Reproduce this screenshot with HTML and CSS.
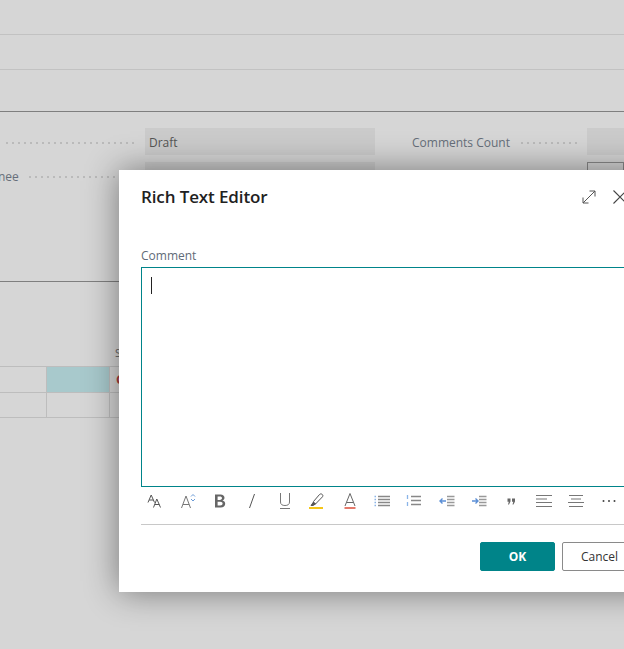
FILE: index.html
```html
<!DOCTYPE html>
<html lang="en">
<head>
    <meta charset="UTF-8">
    <title>Rich Text Editor</title>
    <link rel="stylesheet" href="styles.css">
</head>
<body>

    <!-- Page behind the dialog -->
    <div class="page">
        <div class="bar bar-top"></div>
        <div class="bar bar-mid"></div>
        <div class="bar bar-low"></div>

        <section class="form">
            <div class="form-col">
                <div class="field">
                    <span class="field-label"></span>
                    <span class="dots dots-wide"></span>
                    <span class="field-value">Draft</span>
                </div>
                <div class="field field-next">
                    <span class="field-label field-cut">nee</span>
                    <span class="dots"></span>
                    <span class="field-value"></span>
                </div>
            </div>
            <div class="form-col form-col-right">
                <div class="field">
                    <span class="field-label">Comments Count</span>
                    <span class="dots dots-short"></span>
                    <span class="field-value"></span>
                </div>
                <div class="field field-next field-end">
                    <span class="field-value field-outline"></span>
                </div>
            </div>
        </section>

        <section class="lines">
            <div class="lines-head">S</div>
            <div class="lines-row">
                <div class="cell cell-a"></div>
                <div class="cell cell-b cell-active"></div>
                <div class="cell cell-c cell-red">C</div>
            </div>
            <div class="lines-row">
                <div class="cell cell-a"></div>
                <div class="cell cell-b"></div>
                <div class="cell cell-c"></div>
            </div>
        </section>
    </div>

    <!-- Dialog -->
    <div class="dialog">
        <div class="dialog-head">
            <h1>Rich Text Editor</h1>
            <div class="dialog-actions">
                <svg class="icon-expand" width="16" height="16" viewBox="0 0 16 16" fill="none" stroke="#555" stroke-width="1">
                    <path d="M2 14 14 2M8.5 2H14V7.5M2 8.5V14H7.5"/>
                </svg>
                <svg class="icon-close" width="16" height="16" viewBox="0 0 16 16" fill="none" stroke="#444" stroke-width="1.1">
                    <path d="M1.5 1.5 14.5 14.5M14.5 1.5 1.5 14.5"/>
                </svg>
            </div>
        </div>

        <label class="editor-label">Comment</label>
        <div class="editor"><span class="caret"></span></div>

        <div class="toolbar">
            <span class="tool">
                <svg width="16" height="16" viewBox="0 0 16 16" fill="none" stroke="#555" stroke-width="1">
                    <path d="M1 9.5 4.2 2 7.5 9.5M2.2 7H6.3M6.5 14.5 9.8 6 13.5 14.5M7.8 11.5H12.3"/>
                </svg>
            </span>
            <span class="tool">
                <svg width="16" height="16" viewBox="0 0 16 16" fill="none" stroke="#777" stroke-width="1">
                    <path d="M1.5 15 6 3 10.5 15M3 11.5H9"/>
                    <path d="M11 3.5 13 1.5 15 3.5M11 6 13 8 15 6" stroke="#6a9bd8"/>
                </svg>
            </span>
            <span class="tool">
                <svg width="16" height="16" viewBox="0 0 16 16" fill="#666">
                    <path fill-rule="evenodd" d="M3 1.5H8.5C11 1.5 12.5 2.8 12.5 4.8 12.5 6.2 11.6 7.2 10.3 7.6 12 7.9 13.2 9.1 13.2 10.8 13.2 13 11.4 14.5 8.8 14.5H3ZM5.6 3.5V6.9H7.8C9.2 6.9 10 6.2 10 5.1 10 4 9.2 3.5 7.9 3.5ZM5.6 8.8V12.5H8.2C9.7 12.5 10.6 11.8 10.6 10.6 10.6 9.5 9.7 8.8 8.1 8.8Z"/>
                </svg>
            </span>
            <span class="tool">
                <svg width="16" height="16" viewBox="0 0 16 16" fill="none" stroke="#555" stroke-width="1">
                    <path d="M10.5 1 5.5 15"/>
                </svg>
            </span>
            <span class="tool">
                <svg width="16" height="16" viewBox="0 0 16 16" fill="none" stroke="#777" stroke-width="1">
                    <path d="M3.5 0V9C3.5 11.5 5.3 12.5 8 12.5S12.5 11.5 12.5 9V0"/>
                    <path d="M3 15.5H13"/>
                </svg>
            </span>
            <span class="tool">
                <svg width="16" height="16" viewBox="0 0 16 16" fill="none" stroke="#555" stroke-width="1">
                    <path d="M4.5 8.5 10.5 1.5C11.3 0.7 12.5 0.7 13.3 1.5S14 3.2 13.3 4L6.5 11H4.5Z"/>
                    <path d="M2 12.5 4.5 9 6.5 11 4 12.5Z" fill="#555"/>
                    <path d="M0 15H14" stroke="#f5c518" stroke-width="2"/>
                </svg>
            </span>
            <span class="tool">
                <svg width="16" height="16" viewBox="0 0 16 16" fill="none" stroke="#666" stroke-width="1">
                    <path d="M3 13 8 0.5 13 13M4.8 9.5H11.2"/>
                    <path d="M2.500 15H13.5" stroke="#d8402c" stroke-width="1.4"/>
                </svg>
            </span>
            <span class="tool">
                <svg width="16" height="16" viewBox="0 0 16 16" fill="none" stroke="#888" stroke-width="1.3">
                    <path d="M4 3.5H16M4 6.5H16M4 9.5H16M4 12.5H16"/>
                    <path d="M0.5 3.5H2M0.5 6.5H2M0.5 9.5H2M0.5 12.5H2" stroke="#8ab4e8"/>
                </svg>
            </span>
            <span class="tool">
                <svg width="16" height="16" viewBox="0 0 16 16" fill="none" stroke="#888" stroke-width="1.3">
                    <path d="M5 3.5H15M5 7.5H15M5 11.5H15"/>
                    <path d="M1.5 2V6M1.5 9V13" stroke="#8ab4e8"/>
                </svg>
            </span>
            <span class="tool">
                <svg width="16" height="16" viewBox="0 0 16 16" fill="none" stroke="#999" stroke-width="1.3">
                    <path d="M8 3.5H15.5M8 6.5H15.5M8 9.5H15.5M8 12.5H15.5"/>
                    <path d="M7 8H1M3.5 5.5 1 8 3.5 10.5" stroke="#5b8fd6" stroke-width="1.4"/>
                </svg>
            </span>
            <span class="tool">
                <svg width="16" height="16" viewBox="0 0 16 16" fill="none" stroke="#999" stroke-width="1.3">
                    <path d="M8 3.5H15.5M8 6.5H15.5M8 9.5H15.5M8 12.5H15.5"/>
                    <path d="M1 8H7M4.5 5.5 7 8 4.5 10.5" stroke="#5b8fd6" stroke-width="1.4"/>
                </svg>
            </span>
            <span class="tool">
                <svg width="16" height="16" viewBox="0 0 16 16" fill="#666">
                    <path d="M4.5 5.5H7.5V8.5L6 11.5H5L5.8 8.8H4.5ZM9 5.5H12V8.5L10.5 11.5H9.5L10.3 8.8H9Z"/>
                </svg>
            </span>
            <span class="tool">
                <svg width="16" height="16" viewBox="0 0 16 16" fill="none" stroke="#777" stroke-width="1.2">
                    <path d="M0 2.5H16M0 6H11M0 9.5H16M0 13.5H16"/>
                </svg>
            </span>
            <span class="tool">
                <svg width="16" height="16" viewBox="0 0 16 16" fill="none" stroke="#777" stroke-width="1.2">
                    <path d="M1 2.5H15M3 6H13M0 9.5H16M1 13.5H15"/>
                </svg>
            </span>
            <span class="tool">
                <svg width="16" height="16" viewBox="0 0 16 16" fill="#444">
                    <circle cx="2.5" cy="8" r="1"/>
                    <circle cx="8" cy="8" r="1"/>
                    <circle cx="13.5" cy="8" r="1"/>
                </svg>
            </span>
        </div>

        <div class="dialog-foot">
            <button class="btn btn-primary">OK</button>
            <button class="btn">Cancel</button>
        </div>
    </div>

</body>
</html>
```

FILE: styles.css
```css
* {
    margin: 0;
    padding: 0;
    box-sizing: border-box;
}

body {
    font-family: 'Open Sans', 'Noto Sans', sans-serif;
    background-color: #d6d6d6;
    color: #555;
    width: 624px;
    height: 649px;
    overflow: hidden;
    position: relative;
}

/* Page behind the dialog */
.bar {
    border-bottom: 1px solid #c2c2c2;
}

.bar-top {
    height: 35px;
}

.bar-mid {
    height: 35px;
}

.bar-low {
    height: 42px;
    border-bottom-color: #7f7f7f;
}

.form {
    display: flex;
    height: 170px;
    padding-top: 16px;
    border-bottom: 1px solid #7f7f7f;
}

.form-col {
    width: 375px;
}

.form-col-right {
    margin-left: 37px;
    flex: 1;
}

.field {
    display: flex;
    align-items: center;
    height: 27px;
    font-size: 12px;
    color: #666f7a;
}

.field-next {
    margin-top: 7px;
}

.field-end {
    justify-content: flex-end;
}

.field-label {
    white-space: nowrap;
    padding-top: 2px;
}

.field-cut {
    margin-left: -2px;
}

.dots {
    flex: 1;
    height: 2px;
    margin: 2px 0 0 8px;
    background-image: radial-gradient(circle, #bababa 0.8px, transparent 1px);
    background-size: 6px 2px;
}

.dots-wide {
    margin: 2px 8px 0 4px;
}

.dots-short {
    margin: 2px 9px 0 9px;
}

.field-value {
    width: 230px;
    height: 27px;
    line-height: 29px;
    padding-left: 4px;
    background-color: #cbcbcb;
    color: #555;
    flex-shrink: 0;
}

.form-col-right .field-value {
    width: 37px;
}

.field-outline {
    background-color: transparent;
    border: 1px solid #8a8a8a;
}

.lines {
    padding-top: 64px;
}

.lines-head {
    height: 20px;
    padding-left: 115px;
    font-size: 11px;
    line-height: 14px;
    color: #666;
}

.lines-row {
    display: flex;
    height: 26px;
    border-top: 1px solid #bdbdbd;
}

.lines-row:last-child {
    height: 26px;
    border-bottom: 1px solid #bdbdbd;
}

.cell {
    border-right: 1px solid #bdbdbd;
}

.cell-a {
    width: 47px;
}

.cell-b {
    width: 63px;
}

.cell-c {
    flex: 1;
    padding-left: 6px;
    font-size: 13px;
    line-height: 25px;
    font-weight: 700;
}

.cell-active {
    background-color: #a8c9cc;
}

.cell-red {
    color: #a83a3e;
}

/* Dialog */
.dialog {
    position: absolute;
    left: 119px;
    top: 170px;
    width: 540px;
    height: 422px;
    padding: 0 22px;
    background-color: #fff;
    box-shadow: 0 0 32px rgba(0, 0, 0, 0.45);
}

.dialog-head {
    display: flex;
    align-items: center;
    justify-content: space-between;
    height: 54px;
}

.dialog-head h1 {
    font-size: 17px;
    font-weight: 600;
    letter-spacing: -0.12px;
    color: #212121;
    margin-bottom: 2px;
}

.dialog-actions {
    display: flex;
    gap: 15px;
    margin-right: 9px;
}

.editor-label {
    display: block;
    margin-top: 24px;
    height: 19px;
    font-size: 12px;
    line-height: 16px;
    color: #5f6b78;
}

.editor {
    height: 220px;
    padding: 9px;
    border: 1px solid #00848a;
}

.caret {
    display: block;
    width: 1px;
    height: 17px;
    background-color: #222;
}

.toolbar {
    display: flex;
    align-items: center;
    height: 38px;
    padding-bottom: 9px;
    border-bottom: 1px solid #c8c8c8;
}

.tool {
    display: flex;
    justify-content: center;
    flex-shrink: 0;
    width: 32.4px;
}

.tool:first-child {
    margin-left: -2px;
}

.dialog-foot {
    display: flex;
    justify-content: flex-end;
    gap: 7px;
    margin-top: 17px;
}

.btn {
    width: 75px;
    height: 29px;
    font-family: inherit;
    font-size: 12px;
    color: #333;
    background-color: #fff;
    border: 1px solid #8a8a8a;
    border-radius: 2px;
}

.btn-primary {
    background-color: #008489;
    border-color: #008489;
    color: #fff;
    font-weight: 700;
}
```
